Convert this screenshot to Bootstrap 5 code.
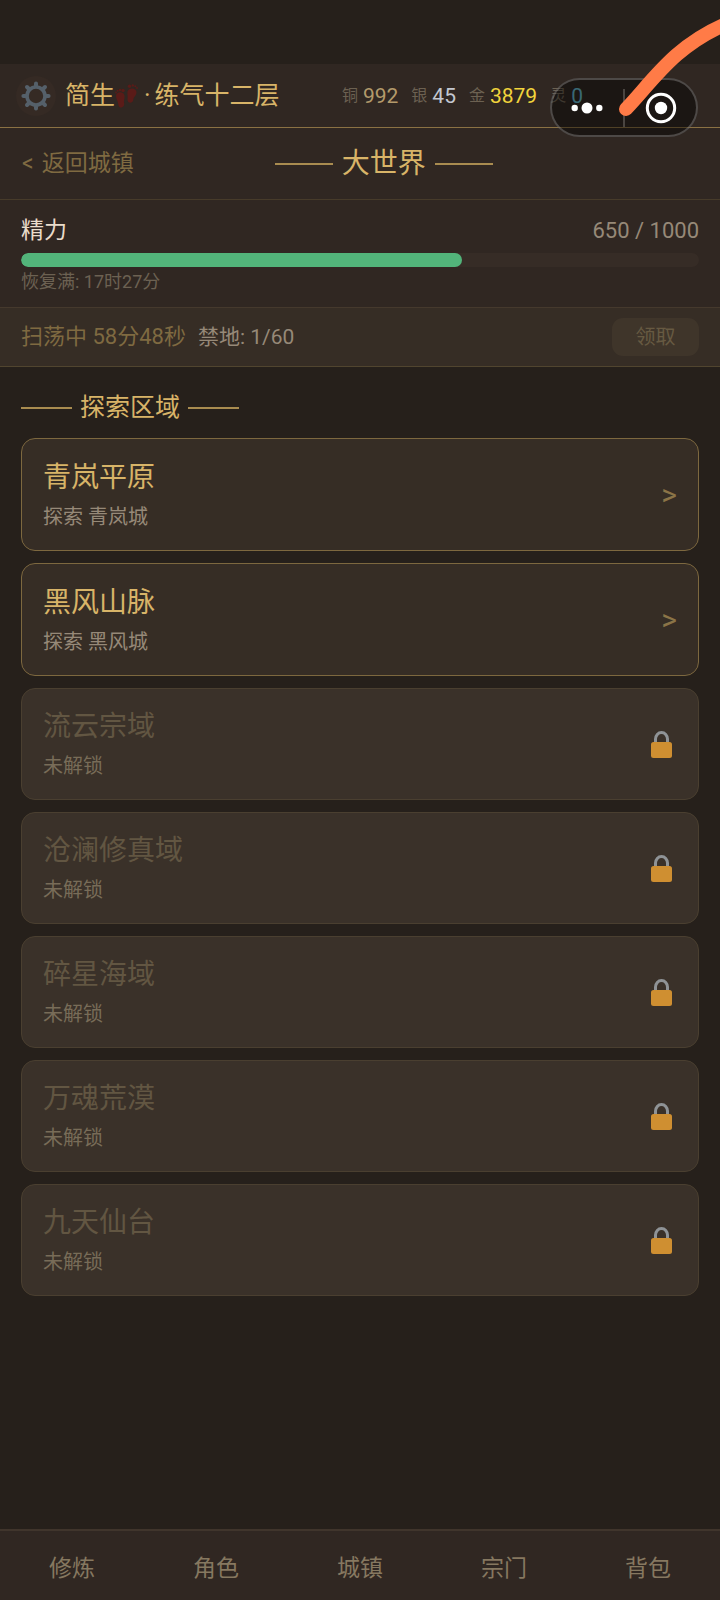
<!DOCTYPE html>
<html lang="zh-CN">
<head>
<meta charset="utf-8">
<meta name="viewport" content="width=device-width, initial-scale=1">
<title>大世界</title>
<link href="https://cdn.jsdelivr.net/npm/bootstrap@5.3.0/dist/css/bootstrap.min.css" rel="stylesheet">
<style>
:root{--ink:#26201b;--panel:#302722;--raised:#362d25;--gold:#d8b468;--gold-dim:#7f6a41;--muted:#968978;--faint:#6c6152}
body{background:var(--ink);color:var(--muted);font-family:Roboto,"Noto Sans CJK SC",sans-serif;font-size:23px;line-height:32px}
a,a:hover{text-decoration:none}
.status-space{height:64px}
.topbar{background:var(--panel);border-bottom:1px solid #8a7143;height:64px;padding-left:16px;gap:9px}
.gear-btn{width:40px;height:40px;background:#352a24}
.player{color:var(--gold);font-size:25px}
.player .dot{margin:0 4px}
.purse{gap:13px;padding-right:137px;font-size:21px}
.purse dl{gap:5px}
.purse dt{font-size:16px;font-weight:400;color:var(--faint)}
.c-copper{color:#b39a6b}.c-silver{color:#c3c7d0}.c-gold{color:#f2d43c}.c-spirit{color:#62b4c8}
.capsule{position:absolute;top:78px;right:22px;width:148px;height:59px;border:2px solid rgba(255,255,255,.22);border-radius:30px;background:rgba(0,0,0,.42)}
.capsule button{width:70px}
.capsule .split{width:2px;height:38px;background:#4a4541}
.swoosh{position:absolute;top:0;right:0;pointer-events:none}
.titlebar{background:var(--panel);border-bottom:1px solid #473b2a;height:72px;padding:1px 21px 0 22px}
.back,.back:hover{color:var(--gold-dim)}
.back{gap:8px}
.ruled{display:flex;align-items:center;color:var(--gold);font-weight:400;margin:0;gap:9px}
.ruled::before,.ruled::after{content:"";height:2px;width:51px;background:#a98c50}
.ruled-lg{font-size:28px}
.ruled-lg::before,.ruled-lg::after{width:58px}
.ruled-sm{font-size:25px;line-height:34px;gap:8px}
.end-space{width:65px}
.energy{background:var(--panel);border-bottom:1px solid #45392d;padding:15px 21px 11px}
.energy-name{color:#eadccb}
.energy-num{font-size:22px}
.energy .progress{height:14px;margin-top:6px;background:#362c26;border-radius:7px;--bs-progress-bar-bg:#52b47a}
.energy .progress-bar{border-radius:7px}
.recover{font-size:18px;line-height:28px;color:var(--faint);margin-top:1px}
.sweep{background:var(--raised);border-bottom:1px solid #51452f;padding:10px 21px;font-size:21px;gap:12px}
.sweep-time{color:var(--gold-dim);font-size:22px}
.claim,.claim:disabled{width:87px;height:38px;font-size:20px;line-height:38px;border-radius:11px;background:#3f352a;color:#675a42;opacity:1}
.regions{padding:24px 21px}
.region-list{gap:12px;margin-top:13px}
.region{min-height:113px;padding:0 21px;border:1px solid #7d683f;border-radius:14px;background:var(--raised);color:var(--muted);text-align:left}
.region-name{font-size:28px;line-height:40px;color:var(--gold)}
.region-sub{font-size:20px;line-height:30px;margin-top:4px}
.go{font-size:30px;color:#8b7447}
.region.locked{min-height:112px;background:#3a3129;border-color:#4a3f30;color:#786c58}
.locked .region-name{color:#625642}
.tabs{background:var(--panel);border-top:2px solid #40352c;height:71px;padding-top:6px}
.tabs a{color:#867860}
</style>
<script src="https://cdn.jsdelivr.net/npm/bootstrap@5.3.0/dist/js/bootstrap.bundle.min.js"></script>
</head>
<body>
<svg width="0" height="0" class="position-absolute" aria-hidden="true">
  <symbol id="lock" viewBox="0 0 31 32">
    <path d="M9.500 16V11a6 6.500 0 0 1 12 0v5" fill="none" stroke="#8f9396" stroke-width="3"/>
    <rect x="5" y="14" width="21" height="16" rx="2.500" fill="#cf8f31"/>
  </symbol>
</svg>
<div class="min-vh-100 d-flex flex-column position-relative overflow-hidden">
  <div class="status-space"></div>
  <header class="topbar d-flex align-items-center">
    <button type="button" class="gear-btn btn p-0 border-0 rounded-circle d-flex align-items-center justify-content-center flex-shrink-0" aria-label="设置">
      <svg width="30" height="30" viewBox="-15 -15 30 30" stroke="#55606a" stroke-linecap="round" fill="none">
        <circle r="9" stroke-width="3.600"/>
        <path d="M0-10.500V-12.600M0 10.500V12.600M-10.500 0H-12.600M10.500 0H12.600M7.500-7.500L9-9M-7.500-7.500L-9-9M7.500 7.500L9 9M-7.500 7.500L-9 9" stroke-width="4"/>
      </svg>
    </button>
    <div class="player d-flex align-items-center text-nowrap">
      <span>简生</span>
      <svg width="25" height="26" viewBox="0 0 25 26" fill="#5a1b18" aria-hidden="true">
        <path d="M1 13C1 8.500 8.500 8 9.500 12.500C10 16 8.500 17 9.200 20.500C9.600 25.500 3.500 26 3.300 21.500C3.300 18 1 16.500 1 13Z"/>
        <path d="M12.500 8.500C13.500 4.500 21 4 21.500 9C21.500 13 18.500 13.500 18.300 17C17.500 21 12 20.500 12.500 16C13 13 12 11.500 12.500 8.500Z"/>
        <circle cx="8" cy="7.500" r="1.700"/><circle cx="5" cy="7" r="1.200"/><circle cx="2.700" cy="7.800" r="1"/><circle cx="1" cy="9.500" r=".9"/>
        <circle cx="14.500" cy="3.200" r="1.700"/><circle cx="17.800" cy="2.400" r="1.200"/><circle cx="20.300" cy="3.200" r="1"/><circle cx="22" cy="5" r=".9"/>
      </svg>
      <span class="dot">·</span>
      <span>练气十二层</span>
    </div>
    <div class="purse d-flex ms-auto text-nowrap">
      <dl class="d-flex align-items-center m-0"><dt>铜</dt><dd class="m-0 c-copper">992</dd></dl>
      <dl class="d-flex align-items-center m-0"><dt>银</dt><dd class="m-0 c-silver">45</dd></dl>
      <dl class="d-flex align-items-center m-0"><dt>金</dt><dd class="m-0 c-gold">3879</dd></dl>
      <dl class="d-flex align-items-center m-0"><dt>灵</dt><dd class="m-0 c-spirit">0</dd></dl>
    </div>
  </header>
  <div class="capsule d-flex align-items-center justify-content-between">
    <button type="button" class="btn p-0 border-0 d-flex justify-content-center" aria-label="更多">
      <svg width="32" height="32" viewBox="-16 -16 32 32" fill="#fff"><circle cx="-12.300" r="3.200"/><circle r="5.500"/><circle cx="12.300" r="3.200"/></svg>
    </button>
    <span class="split"></span>
    <button type="button" class="btn p-0 border-0 d-flex justify-content-center" aria-label="关闭">
      <svg width="32" height="32" viewBox="-16 -16 32 32"><circle r="13.700" fill="none" stroke="#fff" stroke-width="3"/><circle r="6.200" fill="#fff"/></svg>
    </button>
  </div>
  <svg class="swoosh" width="110" height="130" viewBox="0 0 110 130" aria-hidden="true"><path d="M16 109C42 82 64 46 116 24" fill="none" stroke="#ff7b47" stroke-width="14" stroke-linecap="round"/></svg>

  <div class="titlebar d-flex align-items-center">
    <a href="#" class="back d-flex"><span>&lt;</span><span>返回城镇</span></a>
    <div class="flex-fill d-flex justify-content-center"><h1 class="ruled ruled-lg">大世界</h1></div>
    <div class="end-space"></div>
  </div>

  <section class="energy">
    <div class="d-flex justify-content-between">
      <span class="energy-name">精力</span><span class="energy-num">650 / 1000</span>
    </div>
    <div class="progress" role="progressbar" aria-label="精力" aria-valuenow="650" aria-valuemin="0" aria-valuemax="1000"><div class="progress-bar" style="width:65%"></div></div>
    <div class="recover">恢复满: 17时27分</div>
  </section>

  <section class="sweep d-flex align-items-center">
    <span class="sweep-time">扫荡中 58分48秒</span>
    <span>禁地: 1/60</span>
    <button type="button" class="claim btn p-0 border-0 ms-auto" disabled>领取</button>
  </section>

  <main class="regions flex-fill">
    <h2 class="ruled ruled-sm">探索区域</h2>
    <div class="region-list d-flex flex-column">
      <a href="#" class="region d-flex align-items-center justify-content-between"><span><span class="region-name d-block">青岚平原</span><span class="region-sub d-block">探索 青岚城</span></span><span class="go">&gt;</span></a>
      <a href="#" class="region d-flex align-items-center justify-content-between"><span><span class="region-name d-block">黑风山脉</span><span class="region-sub d-block">探索 黑风城</span></span><span class="go">&gt;</span></a>
      <button type="button" class="region locked d-flex align-items-center justify-content-between" disabled><span><span class="region-name d-block">流云宗域</span><span class="region-sub d-block">未解锁</span></span><svg width="31" height="32"><use href="#lock"/></svg></button>
      <button type="button" class="region locked d-flex align-items-center justify-content-between" disabled><span><span class="region-name d-block">沧澜修真域</span><span class="region-sub d-block">未解锁</span></span><svg width="31" height="32"><use href="#lock"/></svg></button>
      <button type="button" class="region locked d-flex align-items-center justify-content-between" disabled><span><span class="region-name d-block">碎星海域</span><span class="region-sub d-block">未解锁</span></span><svg width="31" height="32"><use href="#lock"/></svg></button>
      <button type="button" class="region locked d-flex align-items-center justify-content-between" disabled><span><span class="region-name d-block">万魂荒漠</span><span class="region-sub d-block">未解锁</span></span><svg width="31" height="32"><use href="#lock"/></svg></button>
      <button type="button" class="region locked d-flex align-items-center justify-content-between" disabled><span><span class="region-name d-block">九天仙台</span><span class="region-sub d-block">未解锁</span></span><svg width="31" height="32"><use href="#lock"/></svg></button>
    </div>
  </main>

  <nav class="tabs d-flex align-items-center text-center">
    <a href="#" class="col">修炼</a><a href="#" class="col">角色</a><a href="#" class="col">城镇</a><a href="#" class="col">宗门</a><a href="#" class="col">背包</a>
  </nav>
</div>
</body>
</html>
